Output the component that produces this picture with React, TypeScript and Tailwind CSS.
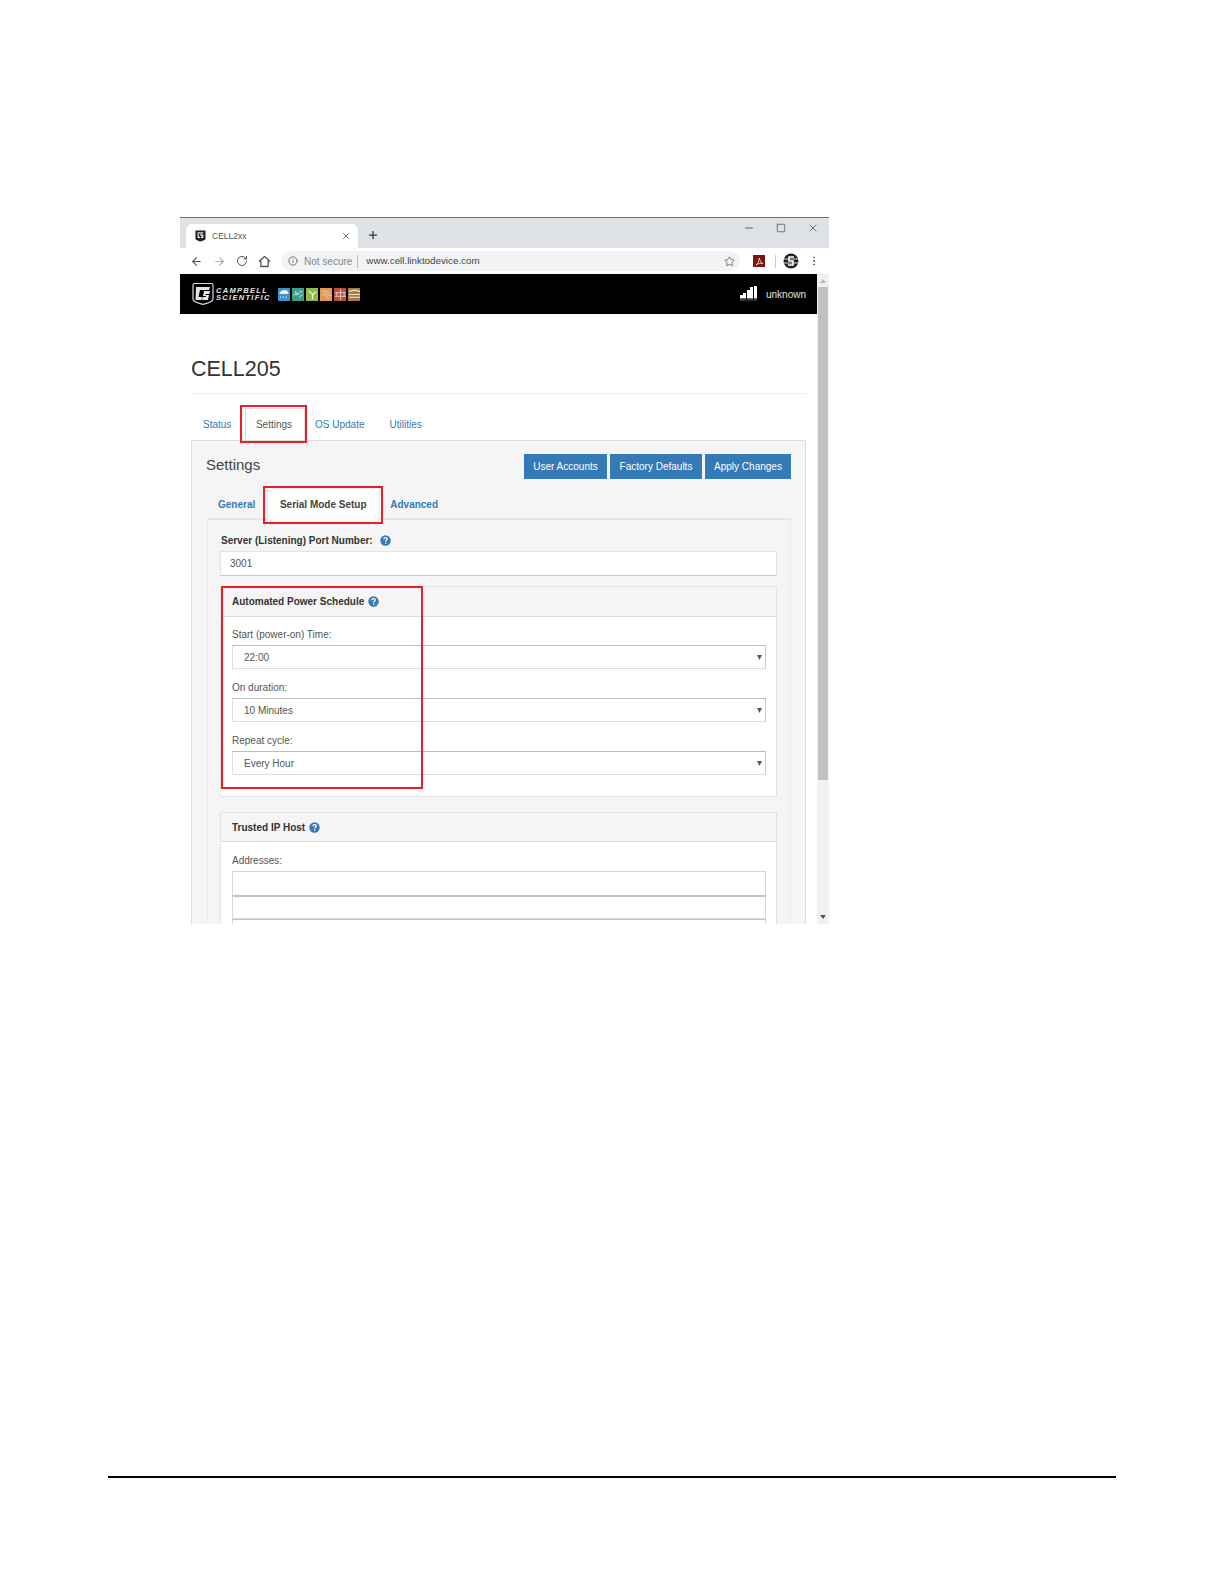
import React from "react";
import { ArrowLeft, ArrowRight, RotateCw, Star, Info, X, Plus, Minus, Square, MoreVertical } from "lucide-react";

function Help() {
  return (
    <svg width="11" height="11" viewBox="0 0 11 11" className="inline-block shrink-0">
      <circle cx="5.5" cy="5.5" r="5.2" fill="#337ab7" />
      <path d="M3.8 4.2c.1-1 .8-1.5 1.8-1.5s1.7.6 1.7 1.4c0 1.2-1.6 1.2-1.6 2.3" fill="none" stroke="#fff" strokeWidth="1.2" />
      <rect x="5" y="7.4" width="1.3" height="1.3" fill="#fff" />
    </svg>
  );
}

function CsLogo({ size = 24 }: { size?: number }) {
  return (
    <svg width={size} height={size} viewBox="0 0 24 24" className="shrink-0">
      <path d="M2 3c0-1 .5-1.500 1.500-1.500h17c1 0 1.500.5 1.500 1.500v14c0 3-5 4-10 5.500C7 21 2 20 2 17z" fill="none" stroke="#d9d9d9" strokeWidth="1.200" />
      <path d="M5 5h14l-1 3H9l-1.500 7H11l-.5 3H4.500z" fill="#e4e4e4" />
      <path d="M13 9h6l-.7 3h-3.500l-.3 1h3.500l-1 5h-6l.6-3h3.200l.2-1h-3z" fill="#e4e4e4" />
    </svg>
  );
}

function Select({ value }: { value: string }) {
  return (
    <div className="flex h-[24px] items-center justify-between border border-[#dedede] border-t-[#bdbdbd] border-r-[#c8c8c8] bg-white pl-[11px] pr-[3px] text-[10px] text-[#555]">
      <span>{value}</span>
      <svg width="5" height="5" viewBox="0 0 6 6"><path d="M0 0h6L3 6z" fill="#555" /></svg>
    </div>
  );
}

function Field({ label, value }: { label: string; value: string }) {
  return (
    <div>
      <div className="flex h-[16px] items-center text-[10px] text-[#555]">{label}</div>
      <div className="mt-[3px]"><Select value={value} /></div>
    </div>
  );
}

function Squares() {
  const items = [
    { bg: "#3d8fc4", el: <path d="M2 6c0-2 2-3 4-3 2-1 5 0 5 3z M3 9v2M6 9v2M9 9v2" fill="#fff" stroke="#fff" strokeWidth=".8" /> },
    { bg: "#3aa08c", el: <path d="M2 8c2-3 3 1 5-2s3-2 4-2M3 4l3 2M8 10l3-3" fill="none" stroke="#fff" strokeWidth="1" /> },
    { bg: "#8dbb4c", el: <path d="M7 12V6M7 7L3 3M7 8l4-4" fill="none" stroke="#fff" strokeWidth="1.100" /> },
    { bg: "#e09a5a", el: <path d="M3 4c3-2 7 0 8 3M2 8c3-2 6 0 7 4M5 3c0 3 4 5 7 5" fill="none" stroke="#f6d3b0" strokeWidth=".8" /> },
    { bg: "#b9503a", el: <path d="M7 1v12M1 5h12M1 9h12M3 5v4M11 5v4" fill="none" stroke="#f3cbbb" strokeWidth="1" /> },
    { bg: "#a5794a", el: <path d="M1 4c4-2 8-2 12 0M1 7h12M1 10h12" fill="none" stroke="#f3e3c4" strokeWidth="1.300" /> },
  ];
  return (
    <div className="flex gap-[2px]">
      {items.map((it, i) => (
        <svg key={i} width="12" height="13" viewBox="0 0 13 14" style={{ background: it.bg }}>{it.el}</svg>
      ))}
    </div>
  );
}

function Red({ className }: { className: string }) {
  return <div className={"pointer-events-none absolute border-2 border-[#ee1c25] " + className} />;
}

export default function App() {
  return (
    <div className="relative h-[1584px] w-[1224px] overflow-hidden bg-white pt-[217px] font-['Liberation_Sans',Arial,sans-serif]">
      <div className="ml-[180px] flex h-[707px] w-[649px] flex-col overflow-hidden border-t border-[#2d8aa0]">
        {/* tab strip */}
        <div className="flex h-[30px] shrink-0 items-end bg-[#dee1e6] pl-[6px]">
          <div className="flex h-[24px] w-[172px] items-center rounded-t-[6px] bg-white pl-[9px] pr-[7px]">
            <svg width="11" height="12" viewBox="0 0 24 26" className="shrink-0">
              <path d="M1 1h22v18c0 3-6 4-11 6C7 23 1 22 1 19z" fill="#222" />
              <path d="M11 6H7v10h4M18 6h-5v5h4v5h-4" fill="none" stroke="#eee" strokeWidth="2.500" />
            </svg>
            <span className="ml-[6px] flex-1 text-[8.500px] text-[#555]">CELL2xx</span>
            <X size={10} strokeWidth={2} color="#555" />
          </div>
          <Plus size={12} strokeWidth={2.5} color="#333" className="mb-[7px] ml-[9px]" />
          <div className="ml-auto mt-[4px] flex items-start gap-[21px] self-start pr-[10px] text-[#333]">
            <Minus size={12} strokeWidth={1.500} />
            <Square size={10} strokeWidth={1.500} className="mt-[1px]" />
            <X size={12} strokeWidth={1.300} />
          </div>
        </div>
        {/* toolbar */}
        <div className="flex h-[26px] shrink-0 items-center bg-white pl-[10px]">
          <div className="flex w-[91px] shrink-0 items-center gap-[10px] text-[#555]">
            <ArrowLeft size={13} strokeWidth={2} />
            <ArrowRight size={13} strokeWidth={2} color="#aaa" />
            <RotateCw size={12} strokeWidth={2} />
            <svg width="13" height="13" viewBox="0 0 13 13" fill="none" stroke="#555" strokeWidth="1.300" strokeLinejoin="round">
              <path d="M1 6.500 6.500 1.500 12 6.500M2.800 5.500v6h7.400v-6" />
            </svg>
          </div>
          <div className="flex h-[20px] w-[459px] shrink-0 items-center rounded-full bg-[#f1f3f4] pl-[7px] pr-[4px] text-[10px]">
            <Info size={10} strokeWidth={1.800} color="#555" />
            <span className="ml-[6px] text-[#888]">Not secure</span>
            <span className="mx-[5px] h-[13px] w-px bg-[#bbb]" />
            <span className="ml-[3px] text-[9.800px] text-[#444]">www.cell.linktodevice.com</span>
            <Star size={11} strokeWidth={1.500} color="#444" className="ml-auto mr-[1px]" />
          </div>
          <div className="ml-[13px] flex items-center">
            <div className="flex h-[12px] w-[12px] items-center justify-center bg-[#7a1710]">
              <svg width="9" height="9" viewBox="0 0 9 9"><path d="M1 8c2-1 3-4 3.300-7C5 4 6 6 8 6.500 6 6 3 6.500 1 8z" fill="none" stroke="#eee" strokeWidth=".8" /></svg>
            </div>
            <span className="ml-[10px] h-[13px] w-px bg-[#ccc]" />
            <svg width="16" height="16" viewBox="0 0 16 16" className="ml-[7px]">
              <circle cx="8" cy="8" r="7.500" fill="#222" />
              <path d="M1 6h14M1 10h14" stroke="#eee" strokeWidth=".9" />
              <path d="M11 4H6v4h4v4H5" fill="none" stroke="#fff" strokeWidth="1.600" />
            </svg>
            <MoreVertical size={12} strokeWidth={2} color="#555" className="ml-[9px]" />
          </div>
        </div>
        {/* viewport */}
        <div className="flex min-h-0 flex-1">
          <div className="w-[637px] shrink-0">
            <div className="flex h-[40px] items-center bg-black pl-[11px] pr-[11px]">
              <CsLogo />
              <div className="ml-[1px] w-[56px] whitespace-nowrap text-[7.500px] font-bold italic leading-[7.500px] tracking-[1.3px] text-[#e4e4e4]">CAMPBELL<br />SCIENTIFIC</div>
              <div className="ml-[6px]"><Squares /></div>
              <div className="ml-auto mr-[1px] flex items-start gap-[0.5px]">
                {[3, 5, 8, 11, 12].map((h, i) => (
                  <div key={i} className="flex h-[17px] w-[3px] flex-col justify-start">
                    <div className="w-full" style={{ height: 12 - h }} />
                    <div className="w-full bg-white" style={{ height: h }} />
                    <div className="h-[5px] w-full bg-gradient-to-b from-[#777] to-black" />
                  </div>
                ))}
              </div>
              <span className="ml-[8px] text-[10px] text-[#e4e4e4]">unknown</span>
            </div>
            <div className="px-[11px]">
              <div className="flex h-[80px] items-end border-b border-[#eee] pb-[7px]">
                <h1 className="text-[21.500px] leading-[34px] text-[#333]">CELL205</h1>
              </div>
              {/* main tabs */}
              <div className="flex h-[46px] items-end pl-[2px] text-[10px] text-[#337ab7]">
                <span className="mb-[8px] w-[40px] pl-[10px] text-left">Status</span>
                <span className="ml-[12px] flex h-[32px] w-[60px] items-center justify-center border border-b-0 border-[#ddd] bg-white pr-[2px] text-[#555]">Settings</span>
                <span className="mb-[8px] ml-[10px]">OS Update</span>
                <span className="mb-[8px] ml-[25px]">Utilities</span>
              </div>
              <div className="border border-b-0 border-[#ddd] bg-[#f5f5f5] pl-[15px] pr-[14px]">
                <div className="flex h-[49px] items-center justify-between">
                  <span className="-ml-[1px] text-[15px] text-[#444]">Settings</span>
                  <div className="mt-[2px] flex gap-[3px] text-[10px] text-white">
                    <span className="flex h-[25px] w-[83px] items-center justify-center bg-[#337ab7]">User Accounts</span>
                    <span className="flex h-[25px] w-[92px] items-center justify-center bg-[#337ab7]">Factory Defaults</span>
                    <span className="flex h-[25px] w-[86px] items-center justify-center bg-[#337ab7]">Apply Changes</span>
                  </div>
                </div>
                {/* inner tabs */}
                <div className="flex h-[30px] items-end border-b-2 border-[#e6e6e6] text-[10px] font-bold text-[#337ab7]">
                  <span className="mb-[6px] ml-[11px]">General</span>
                  <span className="-mb-[2px] ml-[13px] flex h-[31px] w-[110px] items-center justify-center bg-white text-[#444]">Serial Mode Setup</span>
                  <span className="mb-[6px] ml-[12px]">Advanced</span>
                </div>
                <div className="border-x border-[#ececec] pl-[12px] pr-[13px] pt-[13px]">
                  <div className="ml-[1px] flex h-[14px] items-center gap-[7px] text-[10px] font-bold text-[#333]">
                    <span>Server (Listening) Port Number:</span>
                    <Help />
                  </div>
                  <div className="mt-[4px] flex h-[25px] items-center border border-[#e4e4e4] border-b-[#c8c8c8] bg-white pl-[9px] text-[10px] text-[#555]">3001</div>
                  <div className="mt-[10px] border border-[#e4e4e4] bg-white">
                    <div className="flex h-[30px] items-center gap-[4px] border-b border-[#dcdcdc] bg-[#f5f5f5] pl-[11px] text-[10px] font-bold text-[#333]">
                      <span>Automated Power Schedule</span>
                      <Help />
                    </div>
                    <div className="flex flex-col gap-[10px] pb-[21px] pl-[11px] pr-[10px] pt-[9px]">
                      <Field label="Start (power-on) Time:" value="22:00" />
                      <Field label="On duration:" value="10 Minutes" />
                      <Field label="Repeat cycle:" value="Every Hour" />
                    </div>
                  </div>
                  <div className="mt-[15px] border border-[#e4e4e4] bg-white">
                    <div className="flex h-[29px] items-center gap-[4px] border-b border-[#dcdcdc] bg-[#f5f5f5] pl-[11px] text-[10px] font-bold text-[#333]">
                      <span>Trusted IP Host</span>
                      <Help />
                    </div>
                    <div className="pl-[11px] pr-[10px] pt-[10px]">
                      <div className="flex h-[16px] items-center text-[10px] text-[#555]">Addresses:</div>
                      <div className="mt-[3px] h-[24px] border border-[#d8d8d8] border-b-0 bg-white" />
                      <div className="h-[24px] border border-[#d8d8d8] border-t-2 border-t-[#c4c4c4] bg-white" />
                      <div className="h-[24px] border border-[#d8d8d8] border-t-[#c4c4c4] bg-white" />
                    </div>
                  </div>
                </div>
              </div>
            </div>
          </div>
          {/* scrollbar */}
          <div className="flex w-[12px] shrink-0 flex-col items-center bg-[#f1f1f1]">
            <svg width="6" height="4" viewBox="0 0 6 4" className="mt-[5px]"><path d="M0 4h6L3 0z" fill="#bbb" /></svg>
            <div className="mt-[4px] h-[493px] w-[10px] bg-[#c1c1c1]" />
            <svg width="6" height="4" viewBox="0 0 6 4" className="mb-[5px] mt-auto"><path d="M0 0h6L3 4z" fill="#555" /></svg>
          </div>
        </div>
      </div>
      {/* footer rule */}
      <div className="ml-[108px] mt-[552px] h-[2px] w-[1008px] bg-black" />
      {/* annotation boxes */}
      <Red className="left-[240px] top-[405px] h-[38px] w-[67px]" />
      <Red className="left-[263px] top-[486px] h-[38px] w-[120px]" />
      <Red className="left-[221px] top-[586px] h-[203px] w-[202px]" />
    </div>
  );
}
